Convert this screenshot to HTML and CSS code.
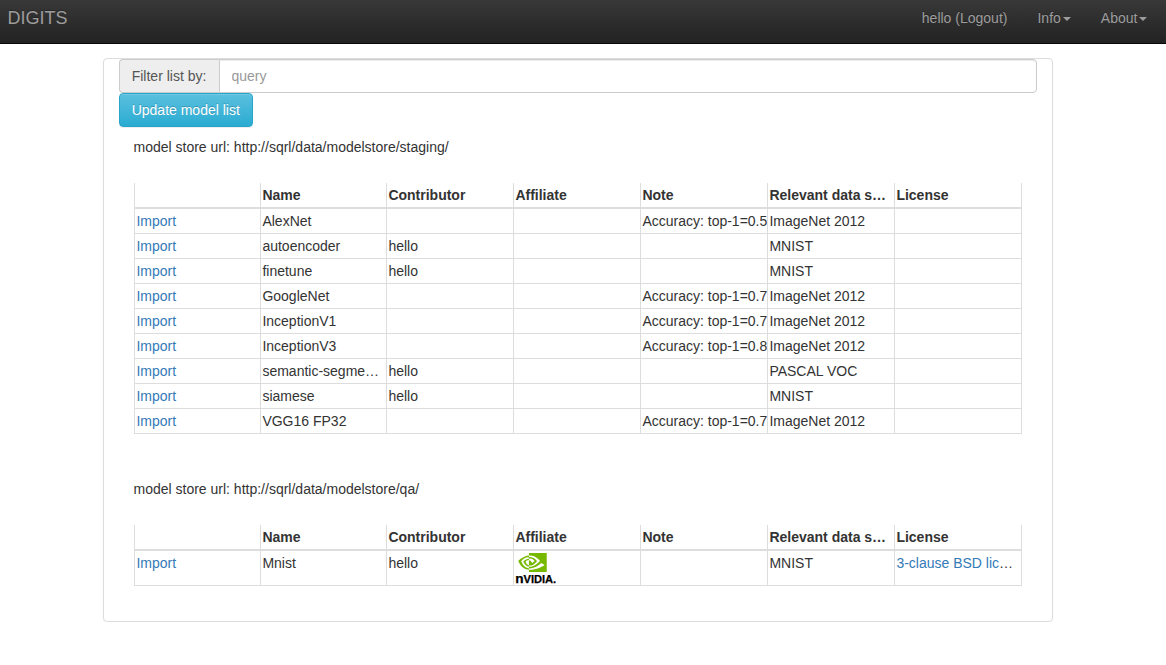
FILE: index.html
```html
<!DOCTYPE html>
<html lang="en">
<head>
<meta charset="utf-8">
<title>DIGITS</title>
<link rel="stylesheet" href="styles.css">
</head>
<body>
<nav class="navbar">
  <a class="brand">DIGITS</a>
  <div class="nav-links">
    <a>hello (Logout)</a>
    <a>Info<b class="caret"></b></a>
    <a>About<b class="caret"></b></a>
  </div>
</nav>
<main class="panel">
  <div class="input-group">
    <label class="addon" for="query">Filter list by:</label>
    <input id="query" class="query" type="text" placeholder="query">
  </div>
  <button class="btn">Update model list</button>

  <section class="store">
    <p class="store-url">model store url: http://sqrl/data/modelstore/staging/</p>
    <table class="models">
      <colgroup><col class="narrow"><col class="narrow"><col><col><col><col><col class="last"></colgroup>
      <thead><tr><th></th><th>Name</th><th>Contributor</th><th>Affiliate</th><th>Note</th><th>Relevant data s…</th><th>License</th></tr></thead>
      <tbody>
        <tr><td><a>Import</a></td><td>AlexNet</td><td></td><td></td><td class="note">Accuracy: top-1=0.5</td><td>ImageNet 2012</td><td></td></tr>
        <tr><td><a>Import</a></td><td>autoencoder</td><td>hello</td><td></td><td></td><td>MNIST</td><td></td></tr>
        <tr><td><a>Import</a></td><td>finetune</td><td>hello</td><td></td><td></td><td>MNIST</td><td></td></tr>
        <tr><td><a>Import</a></td><td>GoogleNet</td><td></td><td></td><td class="note">Accuracy: top-1=0.7</td><td>ImageNet 2012</td><td></td></tr>
        <tr><td><a>Import</a></td><td>InceptionV1</td><td></td><td></td><td class="note">Accuracy: top-1=0.7</td><td>ImageNet 2012</td><td></td></tr>
        <tr><td><a>Import</a></td><td>InceptionV3</td><td></td><td></td><td class="note">Accuracy: top-1=0.8</td><td>ImageNet 2012</td><td></td></tr>
        <tr><td><a>Import</a></td><td>semantic-segme…</td><td>hello</td><td></td><td></td><td>PASCAL VOC</td><td></td></tr>
        <tr><td><a>Import</a></td><td>siamese</td><td>hello</td><td></td><td></td><td>MNIST</td><td></td></tr>
        <tr><td><a>Import</a></td><td>VGG16 FP32</td><td></td><td></td><td class="note">Accuracy: top-1=0.7</td><td>ImageNet 2012</td><td></td></tr>
      </tbody>
    </table>
  </section>

  <section class="store">
    <p class="store-url">model store url: http://sqrl/data/modelstore/qa/</p>
    <table class="models">
      <colgroup><col class="narrow"><col class="narrow"><col><col><col><col><col class="last"></colgroup>
      <thead><tr><th></th><th>Name</th><th>Contributor</th><th>Affiliate</th><th>Note</th><th>Relevant data s…</th><th>License</th></tr></thead>
      <tbody>
        <tr class="tall"><td><a>Import</a></td><td>Mnist</td><td>hello</td><td><svg class="logo" width="42" height="30" viewBox="0 2 42 30" role="img" aria-label="NVIDIA">
          <path fill="#76b900" transform="translate(3.3 -2.9) scale(1.185 1.2)" d="M8.948 8.798v-1.43a6.7 6.7 0 0 1 .424-.018c3.922-.124 6.493 3.374 6.493 3.374s-2.774 3.851-5.75 3.851c-.398 0-.787-.062-1.158-.185v-4.346c1.528.185 1.837.857 2.747 2.385l2.04-1.714s-1.492-1.952-4-1.952a6.016 6.016 0 0 0-.796.035m0-4.735v2.138l.424-.027c5.45-.185 9.01 4.47 9.01 4.47s-4.08 4.964-8.33 4.964c-.37 0-.733-.035-1.095-.097v1.325c.3.035.61.062.91.062 3.957 0 6.82-2.023 9.593-4.408.459.371 2.34 1.263 2.73 1.652-2.633 2.208-8.772 3.984-12.253 3.984-.335 0-.653-.018-.971-.053v1.864H24V4.063zm0 10.326v1.131c-3.657-.654-4.673-4.46-4.673-4.46s1.758-1.944 4.673-2.262v1.237H8.94c-1.528-.186-2.73 1.245-2.73 1.245s.68 2.412 2.739 3.11m-6.495-3.492s2.164-3.197 6.5-3.533V6.201C4.153 6.59 0 10.653 0 10.653s2.35 6.802 8.948 7.42v-1.237c-4.84-.6-6.495-5.938-6.495-5.938"/>
          <text class="wordmark" x="0.2" y="31.8" textLength="41" lengthAdjust="spacingAndGlyphs"><tspan class="wordmark-n">n</tspan>VIDIA.</text>
        </svg></td><td></td><td>MNIST</td><td><a>3-clause BSD lic</a>…</td></tr>
      </tbody>
    </table>
  </section>
</main>
</body>
</html>
```
FILE: styles.css
```css
* { box-sizing: border-box; }
body {
  margin: 0;
  font: 14px/20px "Liberation Sans", Arial, sans-serif;
  color: #333;
  background: #fff;
}
a { color: #337ab7; text-decoration: none; }

.navbar {
  display: flex;
  justify-content: space-between;
  align-items: flex-start;
  height: 44px;
  padding: 8px 18.6px 0 7.5px;
  border-bottom: 1px solid #080808;
  background: linear-gradient(#3c3c3c, #222) 0 -7px / 100% 50px no-repeat;
}
.navbar a { color: #9d9d9d; text-shadow: 0 -1px 0 rgba(0, 0, 0, .25); }
.navbar .brand { font-size: 18px; }
.nav-links { display: flex; gap: 30px; }
.caret {
  display: inline-block;
  margin-left: 2px;
  vertical-align: middle;
  border-top: 4px solid;
  border-left: 4px solid transparent;
  border-right: 4px solid transparent;
}

.panel {
  width: 950px;
  height: 564px;
  margin: 14px 0 0 103px;
  padding: 0 15px;
  border: 1px solid #ddd;
  border-radius: 4px;
  box-shadow: 0 1px 2px rgba(0, 0, 0, .05);
}
.input-group { display: flex; height: 34px; }
.addon {
  width: 100px;
  padding: 6px 11.7px;
  color: #555;
  background: #eee;
  border: 1px solid #ccc;
  border-right: 0;
  border-radius: 4px 0 0 4px;
  white-space: nowrap;
}
.query {
  flex: 1;
  padding: 6px 11.5px;
  font: inherit;
  color: #555;
  border: 1px solid #ccc;
  border-radius: 0 4px 4px 0;
  box-shadow: inset 0 1px 1px rgba(0, 0, 0, .075);
}
.query::placeholder { color: #999; opacity: 1; }
.btn {
  display: block;
  width: 134px;
  height: 34px;
  padding: 0 .5px 0 0;
  font: inherit;
  color: #fff;
  text-shadow: 0 -1px 0 rgba(0, 0, 0, .2);
  background: linear-gradient(#5bc0de, #2aabd2);
  border: 1px solid #28a4c9;
  border-radius: 4px;
  box-shadow: inset 0 1px 0 rgba(255, 255, 255, .15), 0 1px 1px rgba(0, 0, 0, .075);
}

.store { padding: 10px 15px 35px; }
.store-url { margin: 0 0 26px -0.5px; }
.models {
  width: 888px;
  table-layout: fixed;
  border-collapse: separate;
  border-spacing: 0;
}
col { width: 127px; }
.narrow { width: 126px; }
.last { width: 128px; }
th, td {
  height: 25px;
  padding: 2px 3px 2px 1.4px;
  text-align: left;
  vertical-align: top;
  white-space: nowrap;
  overflow: hidden;
  text-overflow: ellipsis;
  border-left: 1px solid #ddd;
  border-bottom: 1px solid #ddd;
}
th { height: 26px; border-bottom-width: 2px; }
th:last-child, td:last-child { border-right: 1px solid #ddd; }
.models .note { padding-right: 0; text-overflow: clip; }
.tall td { height: 35px; }
.logo { display: block; overflow: visible; }
.wordmark { font: bold 10.6px "Liberation Sans", Arial, sans-serif; fill: #000; stroke: #000; stroke-width: .25; }
.wordmark-n { font-size: 13px; }
```
